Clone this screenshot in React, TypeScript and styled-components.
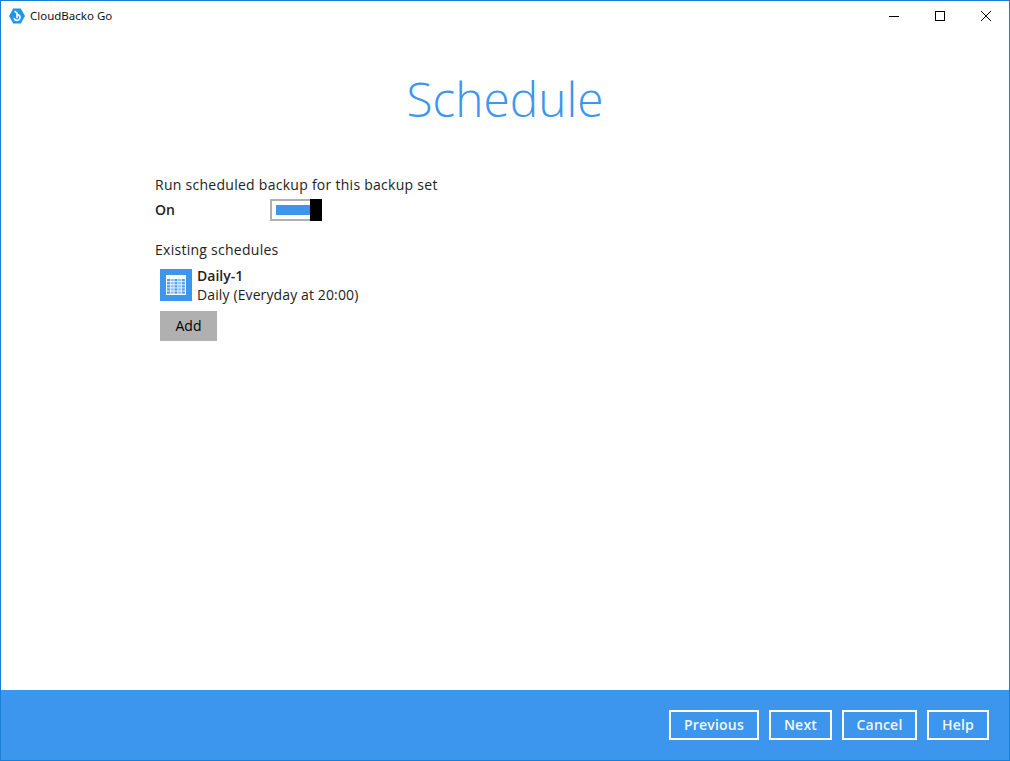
import React from "react";
import styled, { createGlobalStyle } from "styled-components";

const Global = createGlobalStyle`
  html, body { margin: 0; padding: 0; background: #fff; }
  body { font-family: "Open Sans", "Liberation Sans", sans-serif; color: #222; }
`;

const Win = styled.div`
  box-sizing: border-box;
  width: 1010px;
  height: 761px;
  border: 1px solid #1a7fd4;
  display: flex;
  flex-direction: column;
  background: #fff;
`;

const TitleBar = styled.header`
  height: 29px;
  display: flex;
  align-items: center;
  padding-left: 8px;
  flex: none;
`;

const AppName = styled.span`
  margin-left: 5px;
  font-family: "Noto Sans", sans-serif;
  font-size: 11.5px;
  color: #111;
`;

const WinControls = styled.div`
  margin-left: auto;
  display: flex;
`;

const WinButton = styled.div`
  width: 46px;
  height: 29px;
  display: flex;
  align-items: center;
  justify-content: center;
`;

const Main = styled.main`
  flex: 1;
  display: flex;
  flex-direction: column;
`;

const Title = styled.h1`
  margin: 34px 0 0;
  text-align: center;
  font-size: 47.8px;
  line-height: 70px;
  font-weight: 300;
  color: #3c96ee;
`;

const Content = styled.section`
  margin: 41px 0 0 154px;
  display: flex;
  flex-direction: column;
  align-items: flex-start;
`;

const Label = styled.div`
  font-size: 14px;
  line-height: 20px;
  letter-spacing: 0.27px;
`;

const ToggleRow = styled.div`
  margin-top: 4px;
  display: flex;
  align-items: center;
  height: 22px;
`;

const OnLabel = styled.span`
  width: 115px;
  margin-bottom: 2px;
  font-size: 14px;
  font-weight: 600;
`;

const Toggle = styled.div`
  position: relative;
  box-sizing: border-box;
  width: 48px;
  height: 22px;
  border: 2px solid #b0b0b0;
  padding: 4px;
`;

const ToggleFill = styled.div`
  width: 36px;
  height: 10px;
  background: #3c96ee;
`;

const Knob = styled.div`
  position: absolute;
  top: -2px;
  right: -6px;
  width: 12px;
  height: 22px;
  background: #000;
`;

const SectionLabel = styled(Label)`
  margin-top: 19px;
`;

const ScheduleItem = styled.div`
  margin: 6px 0 0 5px;
  display: flex;
  gap: 5px;
`;

const CalBox = styled.div`
  width: 32px;
  height: 32px;
  margin-top: 3px;
  background: #3c96ee;
  display: flex;
  align-items: center;
  justify-content: center;
`;

const ItemText = styled.div`
  display: flex;
  flex-direction: column;
`;

const ItemName = styled.div`
  font-size: 14px;
  line-height: 19px;
  font-weight: 600;
`;

const ItemDesc = styled.div`
  font-size: 14px;
  line-height: 19px;
  letter-spacing: 0.12px;
`;

const AddButton = styled.button`
  margin: 7px 0 0 5px;
  width: 57px;
  height: 30px;
  border: 0;
  padding: 0 0 1px;
  background: #b0b0b0;
  color: #000;
  font: 500 14px "Open Sans", sans-serif;
`;

const Footer = styled.footer`
  height: 70px;
  flex: none;
  background: #3c96ee;
  display: flex;
  align-items: center;
  justify-content: flex-end;
  gap: 10px;
  padding-right: 20px;
`;

const FootButton = styled.button<{ $w: number }>`
  box-sizing: border-box;
  width: ${(p) => p.$w}px;
  height: 30px;
  background: transparent;
  border: 2px solid #fff;
  padding: 0 0 2px;
  color: #f2f8fe;
  letter-spacing: 0.2px;
  font: 600 14px "Open Sans", sans-serif;
`;

const Logo = () => (
  <svg width="16" height="16" viewBox="0 0 16 16">
    <path d="M4.2 .6H11.8L16 8L11.8 15.4H4.2L0 8Z" fill="#1e96ea" />
    <path d="M5.5 3.2L8 5V10.2" fill="none" stroke="#fff" strokeWidth="1.6" />
    <path d="M8.4 6.6A2.9 2.9 0 1 1 5.2 9.8" fill="none" stroke="#fff" strokeWidth="1.6" />
  </svg>
);

const Calendar = () => (
  <svg width="20" height="20" viewBox="0 0 20 20">
    <rect x="0" y="0" width="20" height="20" fill="#fff" />
    {[0, 1, 2, 3, 4].map((r) =>
      [0, 1, 2, 3, 4].map((c) => (
        <rect key={`${r}-${c}`} x={1 + c * 3.7} y={4 + r * 3.1} width="3.1" height="2.3" fill={c % 2 ? "#8cc1f5" : "#4f9ff0"} />
      ))
    )}
  </svg>
);

export default function App() {
  return (
    <Win>
      <Global />
      <TitleBar>
        <Logo />
        <AppName>CloudBacko Go</AppName>
        <WinControls>
          <WinButton>
            <svg width="10" height="10" viewBox="0 0 10 10"><path d="M0 5.5H10" stroke="#000" /></svg>
          </WinButton>
          <WinButton>
            <svg width="10" height="10" viewBox="0 0 10 10"><rect x=".5" y=".5" width="9" height="9" fill="none" stroke="#000" /></svg>
          </WinButton>
          <WinButton>
            <svg width="10" height="10" viewBox="0 0 10 10"><path d="M0 0L10 10M10 0L0 10" stroke="#000" /></svg>
          </WinButton>
        </WinControls>
      </TitleBar>
      <Main>
        <Title>Schedule</Title>
        <Content>
          <Label>Run scheduled backup for this backup set</Label>
          <ToggleRow>
            <OnLabel>On</OnLabel>
            <Toggle>
              <ToggleFill />
              <Knob />
            </Toggle>
          </ToggleRow>
          <SectionLabel>Existing schedules</SectionLabel>
          <ScheduleItem>
            <CalBox><Calendar /></CalBox>
            <ItemText>
              <ItemName>Daily-1</ItemName>
              <ItemDesc>Daily (Everyday at 20:00)</ItemDesc>
            </ItemText>
          </ScheduleItem>
          <AddButton>Add</AddButton>
        </Content>
      </Main>
      <Footer>
        <FootButton $w={90}>Previous</FootButton>
        <FootButton $w={63}>Next</FootButton>
        <FootButton $w={75}>Cancel</FootButton>
        <FootButton $w={62}>Help</FootButton>
      </Footer>
    </Win>
  );
}
